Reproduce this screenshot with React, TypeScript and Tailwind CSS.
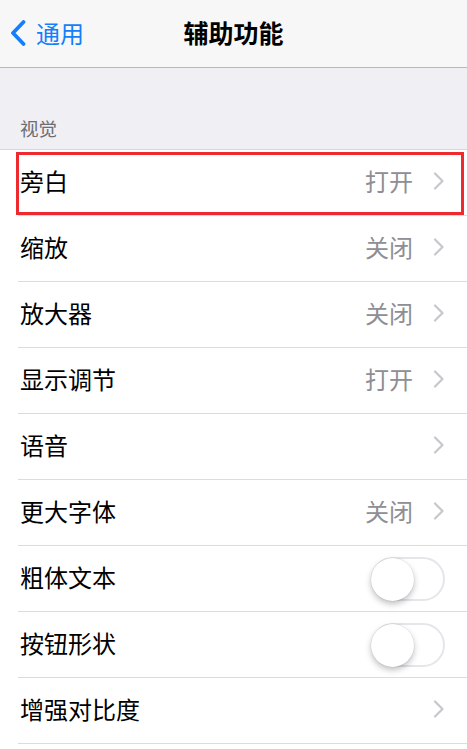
import React from "react";

const font = { fontFamily: '"Noto Sans CJK SC", "Noto Sans", sans-serif' };

function Chevron() {
  return (
    <svg width="12" height="18" viewBox="0 0 12 18" className="shrink-0">
      <path d="M2 1.5 L9.5 9 L2 16.5" fill="none" stroke="#c7c7cc" strokeWidth="2.2" strokeLinecap="round" strokeLinejoin="round" />
    </svg>
  );
}

function Toggle() {
  return (
    <div className="relative w-[74px] h-[44px] rounded-full border-2 border-[#e5e5ea] bg-white mr-[22px] mt-[3px]">
      <div className="absolute left-[-2px] top-[-1px] w-[43px] h-[43px] rounded-full bg-white shadow-[0_3px_6px_rgba(0,0,0,0.25),0_0_0_0.5px_rgba(0,0,0,0.08)]" />
    </div>
  );
}

type Row = { label: string; value?: string; kind: "chev" | "toggle" };

const rows: Row[] = [
  { label: "旁白", value: "打开", kind: "chev" },
  { label: "缩放", value: "关闭", kind: "chev" },
  { label: "放大器", value: "关闭", kind: "chev" },
  { label: "显示调节", value: "打开", kind: "chev" },
  { label: "语音", kind: "chev" },
  { label: "更大字体", value: "关闭", kind: "chev" },
  { label: "粗体文本", kind: "toggle" },
  { label: "按钮形状", kind: "toggle" },
  { label: "增强对比度", kind: "chev" },
];

export default function App() {
  return (
    <div className="w-[467px] h-[749px] overflow-hidden bg-[#efeff4] flex flex-col" style={font}>
      <div className="h-[68px] shrink-0 bg-[#f7f7f7] border-b border-[#b8b8bc] relative flex items-center">
        <div className="flex items-center pl-[10px] gap-[10px] pb-[2px]">
          <svg width="16" height="26" viewBox="0 0 16 26">
            <path d="M13.5 2 L3 13 L13.5 24" fill="none" stroke="#147efb" strokeWidth="3.8" strokeLinecap="round" strokeLinejoin="round" />
          </svg>
          <span className="text-[24px] leading-none text-[#147efb]">通用</span>
        </div>
        <div className="absolute inset-0 flex items-center justify-center pointer-events-none pb-[2px]">
          <span className="text-[25px] leading-none font-bold text-black">辅助功能</span>
        </div>
      </div>
      <div className="h-[81px] shrink-0 flex items-end pl-[20px] pb-[12px]">
        <span className="text-[18.5px] leading-none text-[#6d6d72]">视觉</span>
      </div>
      <div className="bg-white border-t border-[#d8d8dc] flex-1">
        {rows.map((r, i) => (
          <div key={i} className="relative pl-[18px]">
            {i === 0 && (
              <div className="absolute left-[16px] right-[3px] top-[2px] bottom-[1px] border-[3px] border-[#ec2a2f] pointer-events-none" />
            )}
            <div className="h-[66px] flex items-center border-b border-[#dcdce0] pb-[3px]">
              <span className="text-[24px] leading-none text-black pl-[2px] flex-1">{r.label}</span>
              {r.kind === "chev" ? (
                <div className="flex items-center pr-[22px]">
                  {r.value && <span className="text-[24px] leading-none text-[#8e8e93] mr-[20px]">{r.value}</span>}
                  <Chevron />
                </div>
              ) : (
                <Toggle />
              )}
            </div>
          </div>
        ))}
      </div>
    </div>
  );
}
